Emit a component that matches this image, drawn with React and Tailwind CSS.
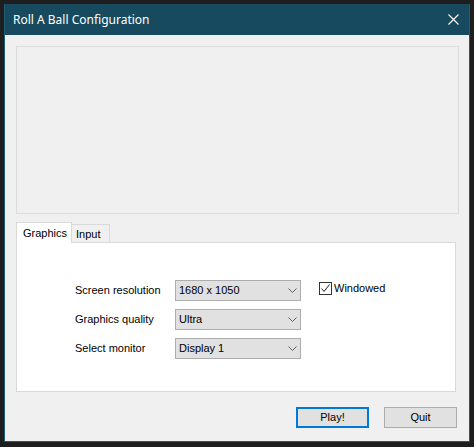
import React from "react";

const Chevron = () => (
  <svg width="9" height="5" viewBox="0 0 9 5" className="shrink-0">
    <path d="M0.5 0.5 L4.5 4.5 L8.5 0.5" fill="none" stroke="#606060" strokeWidth="1" />
  </svg>
);

const Select = ({ value }) => (
  <div className="flex items-center justify-between h-[21px] w-[126px] bg-[#e1e1e1] border border-[#adadad] pl-[3px] pr-[3px] text-[11px] text-black">
    <span>{value}</span>
    <Chevron />
  </div>
);

export default function App() {
  const font = { fontFamily: '"Liberation Sans", Arial, sans-serif' };
  return (
    <div className="w-[474px] h-[447px] bg-[#1e1e1e] overflow-hidden pt-[4px] pl-[4px]">
      <div className="w-[466px] h-[438px] border border-[#1d5d78] border-t-0 bg-[#f0f0f0] flex flex-col">
        <div className="h-[31px] bg-[#174a5e] flex items-center justify-between pl-[8px] pr-[10px] shrink-0">
          <span className="text-white text-[12px] font-['Noto_Sans',sans-serif] leading-none">Roll A Ball Configuration</span>
          <svg width="11" height="11" viewBox="0 0 11 11">
            <path d="M0.5 0.5 L10.5 10.5 M10.5 0.5 L0.5 10.5" stroke="#ffffff" strokeWidth="1.1" />
          </svg>
        </div>
        <div className="flex flex-col pl-[11px] pt-[11px]" style={font}>
          <div className="w-[443px] h-[168px] border border-[#dcdcdc] bg-[#f0f0f0]" />
          <div className="mt-[8px] flex items-end h-[20px]">
            <div className="h-[21px] w-[56px] bg-white border border-[#d9d9d9] border-b-0 text-[11px] flex items-center pl-[6px] pt-[1px] relative z-10 -mb-[1px]">
              Graphics
            </div>
            <div className="h-[18px] w-[38px] bg-[#f0f0f0] border border-[#d9d9d9] border-l-0 border-b-0 text-[11px] flex items-center pl-[4px] pt-[2px]">
              Input
            </div>
          </div>
          <div className="w-[440px] h-[150px] bg-white border border-[#d9d9d9] pl-[58px] pt-[37px] flex items-start">
            <div className="grid grid-cols-[100px_126px] gap-y-[8px] items-center text-[11px] text-black">
              <span>Screen resolution</span>
              <Select value="1680 x 1050" />
              <span>Graphics quality</span>
              <Select value="Ultra" />
              <span>Select monitor</span>
              <Select value="Display 1" />
            </div>
            <div className="ml-[18px] mt-[2px] flex items-start gap-[2px] text-[11px]">
              <div className="w-[13px] h-[13px] border border-[#333333] bg-white flex items-center justify-center">
                <svg width="11" height="11" viewBox="0 0 11 11">
                  <path d="M1.5 5.5 L4 8.5 L9.5 1.5" fill="none" stroke="#222" strokeWidth="1" />
                </svg>
              </div>
              <span className="leading-[13px]">Windowed</span>
            </div>
          </div>
          <div className="flex justify-end gap-[15px] mt-[15px] pr-[12px] text-[11px]">
            <div className="w-[73px] h-[21px] bg-[#e1e1e1] border-2 border-[#0078d7] flex items-center justify-center">Play!</div>
            <div className="w-[73px] h-[21px] bg-[#e1e1e1] border border-[#adadad] flex items-center justify-center">Quit</div>
          </div>
        </div>
      </div>
    </div>
  );
}
